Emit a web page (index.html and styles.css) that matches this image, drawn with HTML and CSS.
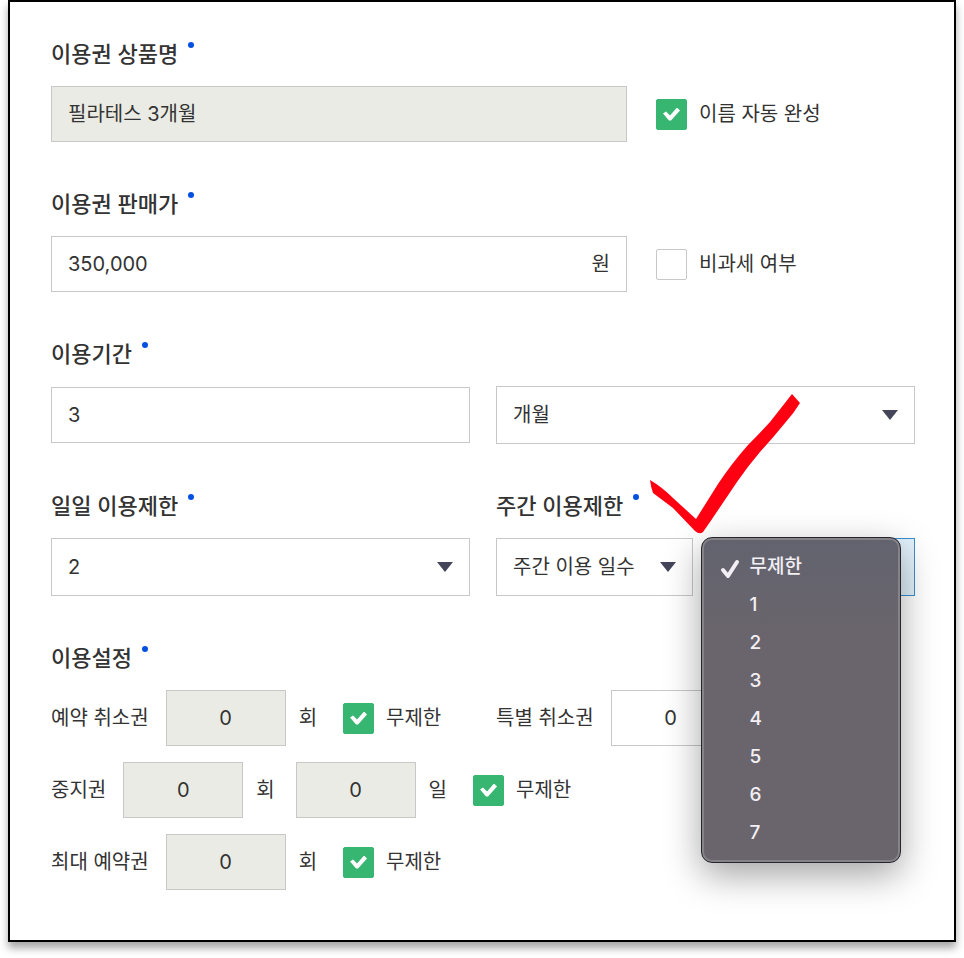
FILE: index.html
```html
<!DOCTYPE html>
<html lang="ko">
<head>
    <meta charset="UTF-8">
    <meta name="viewport" content="width=device-width, initial-scale=1.0">
    <title>이용권</title>
    <link rel="stylesheet" href="styles.css">
</head>
<body>
    <form class="ticket-form">

        <div class="field">
            <label class="title" for="ticket_name">이용권 상품명</label>
            <div class="row">
                <div class="box wide disabled">
                    <input type="text" id="ticket_name" value="필라테스 3개월" readonly>
                </div>
                <label class="check"><input type="checkbox" checked>이름 자동 완성</label>
            </div>
        </div>

        <div class="field">
            <label class="title" for="price">이용권 판매가</label>
            <div class="row">
                <div class="box wide">
                    <input type="text" id="price" value="350,000">
                    <span>원</span>
                </div>
                <label class="check"><input type="checkbox">비과세 여부</label>
            </div>
        </div>

        <div class="field">
            <label class="title" for="period">이용기간</label>
            <div class="columns">
                <div class="box">
                    <input type="text" id="period" value="3">
                </div>
                <div class="select">
                    <select id="period_unit" aria-label="이용기간">
                        <option>개월</option>
                    </select>
                    <svg class="arrow" viewBox="0 0 16 10"><path d="M0 0H16L8 10Z"/></svg>
                </div>
            </div>
        </div>

        <div class="columns">
            <div class="field">
                <label class="title" for="daily_limit">일일 이용제한</label>
                <div class="select">
                    <select id="daily_limit">
                        <option>2</option>
                    </select>
                    <svg class="arrow" viewBox="0 0 16 10"><path d="M0 0H16L8 10Z"/></svg>
                </div>
            </div>

            <div class="field weekly">
                <label class="title" for="weekly_type">주간 이용제한</label>
                <div class="columns">
                    <div class="select">
                        <select id="weekly_type">
                            <option>주간 이용 일수</option>
                        </select>
                        <svg class="arrow" viewBox="0 0 16 10"><path d="M0 0H16L8 10Z"/></svg>
                    </div>
                    <div class="select active">
                        <select id="weekly_limit" aria-label="주간 이용제한"></select>
                        <ul class="menu" role="listbox" aria-label="주간 이용제한">
                            <li role="option" aria-selected="true">
                                <svg class="tick" viewBox="0 0 20 20"><path d="M3 11L8 17L17 3"/></svg>무제한
                            </li>
                            <li role="option">1</li>
                            <li role="option">2</li>
                            <li role="option">3</li>
                            <li role="option">4</li>
                            <li role="option">5</li>
                            <li role="option">6</li>
                            <li role="option">7</li>
                        </ul>
                    </div>
                </div>
                <!-- hand drawn mark over the weekly limit -->
                <svg class="mark" viewBox="0 0 150 140">
                    <path d="M0 86Q12 93 23 104L46 125L68 90Q82 69 98 51Q109 40 120 28L142 0L150 9Q144 19 135 29Q122 45 110 58Q98 72 87 88L60 128L53 138Q50 141 45 137L23 114L3 99Q1 94 0 86Z"/>
                </svg>
            </div>
        </div>

        <div class="field">
            <h2 class="title">이용설정</h2>
            <div class="settings">
                <div class="columns">
                    <div class="row">
                        <label for="cancel_count">예약 취소권</label>
                        <input class="count disabled" type="text" id="cancel_count" value="0" readonly>
                        <span class="unit">회</span>
                        <label class="check"><input type="checkbox" checked>무제한</label>
                    </div>
                    <div class="row">
                        <label for="special_count">특별 취소권</label>
                        <input class="count" type="text" id="special_count" value="0">
                    </div>
                </div>
                <div class="row">
                    <label for="pause_count">중지권</label>
                    <input class="count disabled" type="text" id="pause_count" value="0" readonly>
                    <span class="unit">회</span>
                    <input class="count disabled" type="text" id="pause_days" value="0" aria-label="일" readonly>
                    <span class="unit">일</span>
                    <label class="check"><input type="checkbox" checked>무제한</label>
                </div>
                <div class="row">
                    <label for="max_count">최대 예약권</label>
                    <input class="count disabled" type="text" id="max_count" value="0" readonly>
                    <span class="unit">회</span>
                    <label class="check"><input type="checkbox" checked>무제한</label>
                </div>
            </div>
        </div>

    </form>
</body>
</html>
```
FILE: styles.css
```css
* {
    box-sizing: border-box;
}
body {
    margin: 0;
    padding: 0 8px 16px;
    background-color: #fff;
    color: #333;
    font-family: Inter, "Noto Sans CJK KR", sans-serif;
    font-size: 20px;
    line-height: 32px;
}
input, select {
    margin: 0;
    color: inherit;
    font: inherit;
}
.ticket-form {
    display: flex;
    flex-direction: column;
    gap: 46px;
    padding: 36px 39px 50px 41px;
    border: 2px solid #000;
    background-color: #fff;
    box-shadow: 0 6px 8px rgba(0, 0, 0, 0.35);
}
.title {
    display: flex;
    align-items: flex-start;
    gap: 10px;
    margin: 0 0 16px;
    font-size: 22px;
    font-weight: 500;
    line-height: 32px;
}
/* required dot */
.title::after {
    content: "";
    width: 6px;
    height: 6px;
    margin-top: 4px;
    border-radius: 50%;
    background-color: #0050e0;
}
.row {
    display: flex;
    align-items: center;
}
.columns {
    display: grid;
    grid-template-columns: 1fr 1fr;
    align-items: center;
    gap: 26px;
}
.box {
    display: flex;
    align-items: center;
    height: 56px;
    padding: 0 16px;
    border: 1px solid #c8c8c8;
    background-color: #fff;
}
.box input {
    flex: 1;
    min-width: 0;
    padding: 0;
    border: none;
    outline: none;
    background: none;
}
.wide {
    width: 66.6667%;
    margin-right: 29px;
}
.disabled {
    background-color: #eaebe5;
}
.select {
    position: relative;
}
.select select {
    display: block;
    width: 100%;
    height: 58px;
    padding: 0 40px 0 16px;
    border: 1px solid #c8c8c8;
    border-radius: 0;
    background-color: #fff;
    appearance: none;
}
.active select {
    border-color: #3a8fd0;
    background-color: #e2f2fc;
}
.arrow {
    position: absolute;
    top: 24px;
    right: 17px;
    width: 16px;
    height: 10px;
    fill: #45455a;
    pointer-events: none;
}
.check {
    display: flex;
    align-items: center;
    gap: 12px;
}
.check input {
    display: grid;
    place-items: center;
    width: 31px;
    height: 31px;
    border: 1px solid #c8c8c8;
    border-radius: 2px;
    background-color: #fff;
    appearance: none;
}
.check input:checked {
    border-color: #37b672;
    background-color: #37b672;
}
.check input:checked::before {
    content: "";
    width: 17px;
    height: 13px;
    background-color: #fff;
    clip-path: polygon(0 6px, 3px 4px, 7px 8px, 14px 0, 17px 3px, 8px 13px, 6px 13px);
}
.settings {
    display: flex;
    flex-direction: column;
    gap: 16px;
}
.count {
    width: 120px;
    height: 56px;
    margin-left: 17px;
    padding: 0;
    border: 1px solid #c8c8c8;
    text-align: center;
}
.unit {
    margin-left: 13px;
}
.unit + .count {
    margin-left: 21px;
}
.unit + .check {
    margin-left: 26px;
}
.weekly {
    position: relative;
}
.menu {
    position: absolute;
    z-index: 1;
    top: -1px;
    left: -18px;
    width: 200px;
    margin: 0;
    padding: 10px 0;
    border: 1px solid #26262c;
    border-radius: 11px;
    background: linear-gradient(#62636f, #6a656c 30%, #6a656c);
    box-shadow: inset 0 0 0 2px #858388, 0 12px 36px rgba(0, 0, 0, 0.36);
    color: #f2eff5;
    font-size: 19px;
    font-weight: 500;
    list-style: none;
}
.menu li {
    display: flex;
    align-items: center;
    height: 38px;
    padding-left: 48px;
}
.tick {
    width: 20px;
    height: 20px;
    margin: 4px 10px 0 -30px;
    fill: none;
    stroke: #f2eff5;
    stroke-width: 4;
    stroke-linecap: round;
    stroke-linejoin: round;
}
.mark {
    position: absolute;
    z-index: 2;
    top: -96px;
    left: 154px;
    width: 150px;
    height: 140px;
    fill: #ff0013;
    pointer-events: none;
}
```
